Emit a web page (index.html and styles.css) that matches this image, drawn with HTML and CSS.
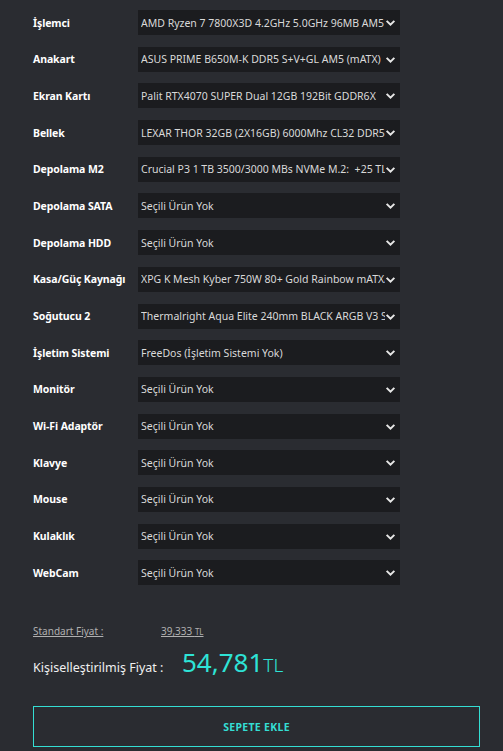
FILE: index.html
```html
<!DOCTYPE html>
<html lang="tr">

<head>
    <meta charset="UTF-8">
    <meta name="viewport" content="width=device-width, initial-scale=1.0">
    <title>Sistem Topla</title>
    <link rel="stylesheet" href="styles.css">
</head>

<body>

    <div class="builder">
        <div class="parts">
            <label class="part-label">İşlemci</label>
            <div class="part-select"><span>AMD Ryzen 7 7800X3D 4.2GHz 5.0GHz 96MB AM5 (120W)</span><svg viewBox="0 0 10 10"><path d="M1.5 3.5 L5 7 L8.5 3.5"/></svg></div>

            <label class="part-label">Anakart</label>
            <div class="part-select"><span>ASUS PRIME B650M-K DDR5 S+V+GL AM5 (mATX)</span><svg viewBox="0 0 10 10"><path d="M1.5 3.5 L5 7 L8.5 3.5"/></svg></div>

            <label class="part-label">Ekran Kartı</label>
            <div class="part-select"><span>Palit RTX4070 SUPER Dual 12GB 192Bit GDDR6X</span><svg viewBox="0 0 10 10"><path d="M1.5 3.5 L5 7 L8.5 3.5"/></svg></div>

            <label class="part-label">Bellek</label>
            <div class="part-select"><span>LEXAR THOR 32GB (2X16GB) 6000Mhz CL32 DDR5 Siyah</span><svg viewBox="0 0 10 10"><path d="M1.5 3.5 L5 7 L8.5 3.5"/></svg></div>

            <label class="part-label">Depolama M2</label>
            <div class="part-select"><span>Crucial P3 1 TB 3500/3000 MBs NVMe M.2:&nbsp; +25 TL</span><svg viewBox="0 0 10 10"><path d="M1.5 3.5 L5 7 L8.5 3.5"/></svg></div>

            <label class="part-label">Depolama SATA</label>
            <div class="part-select"><span>Seçili Ürün Yok</span><svg viewBox="0 0 10 10"><path d="M1.5 3.5 L5 7 L8.5 3.5"/></svg></div>

            <label class="part-label">Depolama HDD</label>
            <div class="part-select"><span>Seçili Ürün Yok</span><svg viewBox="0 0 10 10"><path d="M1.5 3.5 L5 7 L8.5 3.5"/></svg></div>

            <label class="part-label">Kasa/Güç Kaynağı</label>
            <div class="part-select"><span>XPG K Mesh Kyber 750W 80+ Gold Rainbow mATX/ATX</span><svg viewBox="0 0 10 10"><path d="M1.5 3.5 L5 7 L8.5 3.5"/></svg></div>

            <label class="part-label">Soğutucu 2</label>
            <div class="part-select"><span>Thermalright Aqua Elite 240mm BLACK ARGB V3 Sıvı Soğutucu</span><svg viewBox="0 0 10 10"><path d="M1.5 3.5 L5 7 L8.5 3.5"/></svg></div>

            <label class="part-label">İşletim Sistemi</label>
            <div class="part-select"><span>FreeDos (İşletim Sistemi Yok)</span><svg viewBox="0 0 10 10"><path d="M1.5 3.5 L5 7 L8.5 3.5"/></svg></div>

            <label class="part-label">Monitör</label>
            <div class="part-select"><span>Seçili Ürün Yok</span><svg viewBox="0 0 10 10"><path d="M1.5 3.5 L5 7 L8.5 3.5"/></svg></div>

            <label class="part-label">Wi-Fi Adaptör</label>
            <div class="part-select"><span>Seçili Ürün Yok</span><svg viewBox="0 0 10 10"><path d="M1.5 3.5 L5 7 L8.5 3.5"/></svg></div>

            <label class="part-label">Klavye</label>
            <div class="part-select"><span>Seçili Ürün Yok</span><svg viewBox="0 0 10 10"><path d="M1.5 3.5 L5 7 L8.5 3.5"/></svg></div>

            <label class="part-label">Mouse</label>
            <div class="part-select"><span>Seçili Ürün Yok</span><svg viewBox="0 0 10 10"><path d="M1.5 3.5 L5 7 L8.5 3.5"/></svg></div>

            <label class="part-label">Kulaklık</label>
            <div class="part-select"><span>Seçili Ürün Yok</span><svg viewBox="0 0 10 10"><path d="M1.5 3.5 L5 7 L8.5 3.5"/></svg></div>

            <label class="part-label">WebCam</label>
            <div class="part-select"><span>Seçili Ürün Yok</span><svg viewBox="0 0 10 10"><path d="M1.5 3.5 L5 7 L8.5 3.5"/></svg></div>
        </div>

        <!-- Fiyat bilgisi -->
        <div class="prices">
            <div class="price-std">
                <span class="price-std-label">Standart Fiyat :</span>
                <span class="price-std-value">39,333 <small>TL</small></span>
            </div>
            <div class="price-custom">
                <span class="price-custom-label">Kişiselleştirilmiş Fiyat :</span>
                <span class="price-custom-value">54,781<small>TL</small></span>
            </div>
        </div>

        <button class="add-cart">SEPETE EKLE</button>
    </div>

</body>

</html>
```

FILE: styles.css
```css
body {
    margin: 0;
    background-color: #2a2c31;
    color: #fff;
    font-family: "Noto Sans", Arial, sans-serif;
}

.builder {
    padding: 10px 23px 0 33px;
}

/* Parça listesi */
.parts {
    display: grid;
    grid-template-columns: 105px 262px;
    grid-auto-rows: 25px;
    row-gap: 11.7px;
    align-items: center;
}

.part-label {
    font-size: 10.5px;
    font-weight: 700;
    letter-spacing: -0.1px;
    color: #fff;
    white-space: nowrap;
}

.part-select {
    height: 25px;
    background-color: #1b1c1f;
    display: flex;
    align-items: center;
    padding: 0 4px 0 3px;
    color: #d9d9d9;
    font-size: 10.5px;
    position: relative;
}

.part-select span {
    flex: 1;
    white-space: nowrap;
    overflow: hidden;
    padding-right: 4px;
}

.part-select svg {
    width: 11px;
    height: 11px;
    flex: none;
    fill: none;
    stroke: #e6e6e6;
    stroke-width: 1.8;
}

/* Fiyatlar */
.prices {
    margin-top: 39px;
}

.price-std {
    display: flex;
    font-size: 10px;
    color: #b0b0b0;
}

.price-std span {
    text-decoration: underline;
}

.price-std-label {
    width: 128px;
}

.price-std-value small {
    font-size: 8px;
}

.price-custom {
    display: flex;
    align-items: baseline;
    margin-top: 6px;
}

.price-custom-label {
    width: 149px;
    font-size: 12.5px;
    color: #f0f0f0;
}

.price-custom-value {
    font-size: 26px;
    color: #2ee3d6;
}

.price-custom-value small {
    font-size: 19px;
    font-weight: 300;
}

.add-cart {
    display: block;
    width: 447px;
    height: 41px;
    margin-top: 26px;
    background: transparent;
    border: 1px solid #34ded3;
    color: #34ded3;
    font-family: "Noto Sans", Arial, sans-serif;
    font-weight: 700;
    font-size: 10.5px;
    letter-spacing: 0.3px;
    cursor: pointer;
}
```
